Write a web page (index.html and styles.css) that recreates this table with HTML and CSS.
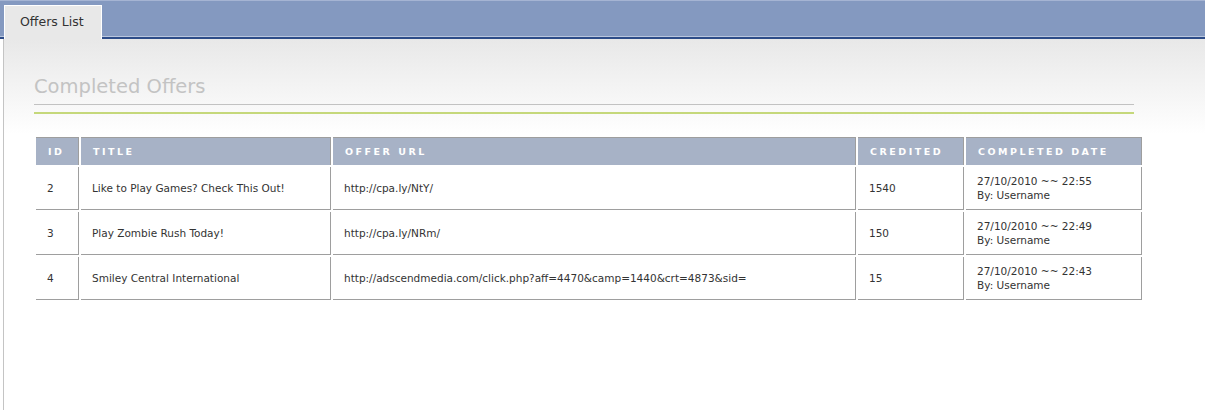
FILE: index.html
```html
<!DOCTYPE html>
<html>
<head>
<meta charset="utf-8">
<title>Offers List</title>
<link rel="stylesheet" href="styles.css">
</head>
<body>
<div class="topbar">
  <div class="tab">Offers List</div>
</div>
<div class="content">
  <h2 class="heading">Completed Offers</h2>
  <div class="accent"></div>
  <table class="offers">
    <thead>
      <tr>
        <th class="c-id">ID</th>
        <th class="c-title">Title</th>
        <th class="c-url">Offer URL</th>
        <th class="c-cred">Credited</th>
        <th class="c-date">Completed Date</th>
      </tr>
    </thead>
    <tbody>
      <tr>
        <td>2</td>
        <td>Like to Play Games? Check This Out!</td>
        <td>http://cpa.ly/NtY/</td>
        <td>1540</td>
        <td>27/10/2010 ~~ 22:55<br>By: Username</td>
      </tr>
      <tr>
        <td>3</td>
        <td>Play Zombie Rush Today!</td>
        <td>http://cpa.ly/NRm/</td>
        <td>150</td>
        <td>27/10/2010 ~~ 22:49<br>By: Username</td>
      </tr>
      <tr>
        <td>4</td>
        <td>Smiley Central International</td>
        <td>http://adscendmedia.com/click.php?aff=4470&amp;camp=1440&amp;crt=4873&amp;sid=</td>
        <td>15</td>
        <td>27/10/2010 ~~ 22:43<br>By: Username</td>
      </tr>
    </tbody>
  </table>
</div>
</body>
</html>
```

FILE: styles.css
```css
html, body {
  margin: 0;
  padding: 0;
  background: #ffffff;
  font-family: "DejaVu Sans", Verdana, sans-serif;
  color: #333333;
}

.topbar {
  height: 36px;
  background: #8499c0;
  border-top: 1px solid #a5b4d3;
  border-bottom: 2px solid #2d4c88;
  box-shadow: inset 0 -1px 0 #b9c6de;
  display: flex;
  align-items: flex-end;
  padding-left: 4px;
}

.tab {
  height: 34px;
  margin-bottom: -2px;
  width: 98px;
  box-sizing: border-box;
  background: #e8e8e8;
  border: 1px solid #ffffff;
  border-bottom: none;
  font-size: 12.5px;
  line-height: 32px;
  padding-left: 15px;
  color: #333333;
}

.content {
  margin-left: 3px;
  border-left: 1px solid #c4c4c4;
  min-height: 371px;
  box-sizing: border-box;
  padding: 36px 0 0 30px;
  background: linear-gradient(#e8e8e8 0px, #fafafa 75px, #ffffff 95px);
}

.heading {
  margin: 0;
  width: 1100px;
  font-size: 19.5px;
  font-weight: normal;
  line-height: 24px;
  color: #c3c3c3;
  padding-bottom: 5px;
  border-bottom: 1px solid #c2c2c2;
}

.accent {
  width: 1100px;
  height: 2px;
  margin-top: 7px;
  background: #c5d87b;
}

.offers {
  margin-top: 21px;
  border-collapse: separate;
  border-spacing: 2px;
  font-size: 10.5px;
  color: #333333;
}

.offers th {
  height: 28px;
  box-sizing: border-box;
  padding: 0 0 0 12px;
  text-align: left;
  background: #a7b2c6;
  color: #ffffff;
  font-size: 9.5px;
  font-weight: bold;
  letter-spacing: 2.5px;
  text-transform: uppercase;
  border-top: 1px solid #9e9e9e;
  border-right: 1px solid #9e9e9e;
}

.offers td {
  height: 43px;
  box-sizing: border-box;
  padding: 0 0 0 11px;
  line-height: 14px;
  vertical-align: middle;
  border-right: 1px solid #9e9e9e;
  border-bottom: 1px solid #9e9e9e;
}

.c-id { width: 43px; }
.c-title { width: 250px; }
.c-url { width: 523px; }
.c-cred { width: 106px; }
.c-date { width: 176px; }
```
